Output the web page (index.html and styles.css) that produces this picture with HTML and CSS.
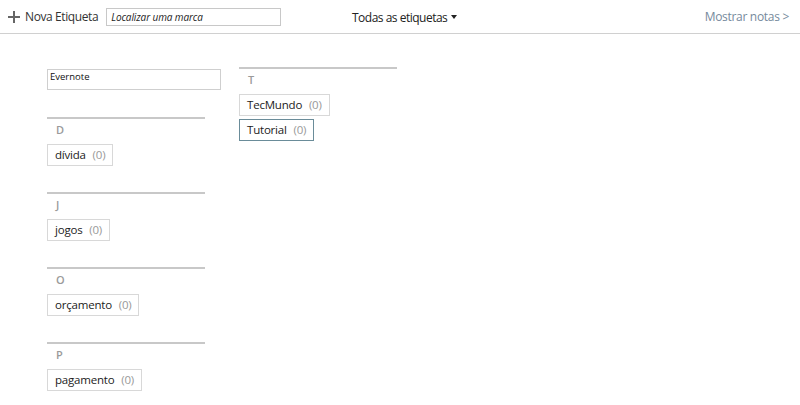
FILE: index.html
```html
<!DOCTYPE html>
<html lang="pt">
<head>
<meta charset="utf-8">
<link rel="stylesheet" href="styles.css">
</head>
<body>
<header class="topbar">
  <div class="left">
    <span class="new-tag">
      <svg class="plus" width="12" height="12" viewBox="0 0 12 12"><path d="M6 0v12M0 6h12" stroke="#666" stroke-width="2"/></svg>
      Nova Etiqueta
    </span>
    <div class="search">Localizar uma marca</div>
  </div>
  <div class="center">Todas as etiquetas <span class="caret"></span></div>
  <div class="right">Mostrar notas &gt;</div>
</header>
<main class="board">
  <div class="col">
    <div class="rename">Evernote</div>
    <section class="group">
      <div class="letter">D</div>
      <div class="tag">dívida <span class="count">(0)</span></div>
    </section>
    <section class="group">
      <div class="letter">J</div>
      <div class="tag">jogos <span class="count">(0)</span></div>
    </section>
    <section class="group">
      <div class="letter">O</div>
      <div class="tag">orçamento <span class="count">(0)</span></div>
    </section>
    <section class="group">
      <div class="letter">P</div>
      <div class="tag">pagamento <span class="count">(0)</span></div>
    </section>
  </div>
  <div class="col col2">
    <section class="group first">
      <div class="letter">T</div>
      <div class="tag">TecMundo <span class="count">(0)</span></div>
      <div class="tag selected">Tutorial <span class="count">(0)</span></div>
    </section>
  </div>
</main>
</body>
</html>
```
FILE: styles.css
```css
* { box-sizing: border-box; }
body {
  margin: 0;
  font-family: "Open Sans", "Noto Sans", sans-serif;
  background: #fff;
  color: #333;
}
.topbar {
  height: 34px;
  border-bottom: 1px solid #d0d0d0;
  display: flex;
  align-items: center;
  padding: 0 11px 0 8px;
  position: relative;
}
.left {
  display: flex;
  align-items: center;
  flex: 1;
}
.new-tag {
  display: flex;
  align-items: center;
  gap: 5px;
  font-size: 12px;
  color: #333;
  letter-spacing: -0.4px;
}
.plus { display: block; }
.search {
  margin-left: 8px;
  width: 175px;
  height: 18px;
  border: 1px solid #c8c8c8;
  font-size: 10px;
  font-style: italic;
  color: #222;
  padding: 1px 4px 0;
  line-height: 15px;
  letter-spacing: -0.1px;
}
.center {
  position: absolute;
  left: 352px;
  top: 9px;
  font-size: 12px;
  letter-spacing: -0.5px;
  color: #222;
}
.caret {
  display: inline-block;
  width: 0;
  height: 0;
  border-left: 3.5px solid transparent;
  border-right: 3.5px solid transparent;
  border-top: 4px solid #222;
  vertical-align: 3px;
  margin-left: 1px;
}
.right {
  font-size: 12px;
  color: #768a9c;
  letter-spacing: -0.3px;
}
.board {
  display: flex;
  gap: 18px;
  padding: 35px 0 0 47px;
}
.col {
  width: 174px;
  display: flex;
  flex-direction: column;
}
.col2 {
  width: 158px;
  margin-top: -2px;
}
.rename {
  width: 174px;
  height: 21px;
  border: 1px solid #cfcfcf;
  font-size: 9.5px;
  color: #111;
  padding: 1px 2px;
  line-height: 12px;
  margin-bottom: 27px;
}
.group {
  width: 158px;
  border-top: 2px solid #c8c8c8;
  padding-top: 2px;
  margin-bottom: 26px;
  display: flex;
  flex-direction: column;
  align-items: flex-start;
  gap: 3px;
}
.group.first { margin-bottom: 0; }
.letter {
  font-size: 11px;
  font-weight: 600;
  color: #9a9a9a;
  padding-left: 9px;
  height: 20px;
  line-height: 17px;
}
.tag {
  height: 22px;
  border: 1px solid #d8d8d8;
  font-size: 11.5px;
  line-height: 20px;
  padding: 0 7px;
  color: #222;
  white-space: nowrap;
  letter-spacing: -0.2px;
}
.tag.selected { border-color: #6a8c99; }
.count {
  color: #999;
  margin-left: 4px;
}
```
